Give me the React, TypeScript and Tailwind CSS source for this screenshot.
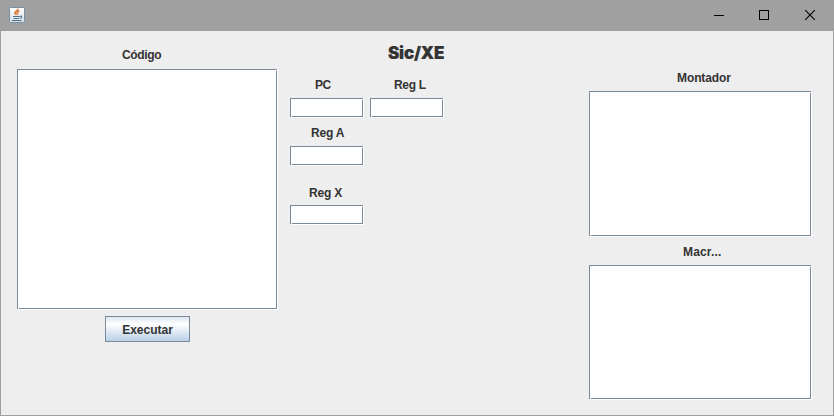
import type { ReactNode } from "react";

function Label({ children, className }: { children: ReactNode; className: string }) {
  return <div className={`h-4 w-fit whitespace-nowrap leading-4 ${className}`}>{children}</div>;
}

/* Metal look-and-feel bevel: slate outline, white drop edge, two notched corners. */
function Bevel({ className }: { className: string }) {
  return (
    <div className={`relative border border-[#7a8a99] bg-white shadow-[1px_1px_0_0_#ffffff] ${className}`}>
      <span className="absolute -right-px top-0 size-px bg-[#eeeeee]" />
      <span className="absolute -bottom-px left-0 size-px bg-[#eeeeee]" />
    </div>
  );
}

function JavaIcon() {
  return (
    <svg width="16" height="16" viewBox="0 0 16 16" fill="none">
      <defs>
        <linearGradient id="tile" x1="0" y1="0" x2="0" y2="1">
          <stop offset="0" stopColor="#ffffff" />
          <stop offset="1" stopColor="#d5dee5" />
        </linearGradient>
      </defs>
      <rect x="0.5" y="0.5" width="15" height="15" rx="1" fill="url(#tile)" stroke="#7890a2" />
      <path d="M9 1.8c.6 1.6-3.5 2.4-3.1 4.2.2.9 1.1 1.3 1.3 1.8M10.4 4C8.3 4.8 7.8 5.6 8.4 6.4c.4.6.2 1-.2 1.4" stroke="#dc7838" strokeWidth="1.6" />
      <path d="M4 9.5h7M4.8 11.5h5.4M3 13.5h9.4M11 9.2c2.3-.5 2.1 1.7.2 2" stroke="#4d738e" strokeWidth="1.1" />
    </svg>
  );
}

export default function App() {
  return (
    <div
      className="flex h-[416px] w-[834px] flex-col overflow-hidden bg-[#eeeeee] text-xs font-bold text-[#333333]"
      style={{ fontFamily: '"Liberation Sans", Arial, sans-serif' }}
    >
      <header className="flex h-[31px] shrink-0 items-start justify-between bg-[#a0a0a0] text-black">
        <div className="pl-[9px] pt-[7px]">
          <JavaIcon />
        </div>
        <svg width="144" height="31" viewBox="0 0 144 31" fill="none" stroke="currentColor">
          <path d="M24 15.5h10" />
          <rect x="69.5" y="10.5" width="9" height="9" />
          <path d="M115.2 10.2l9.6 9.6M124.8 10.2l-9.6 9.6" strokeWidth="1.1" />
        </svg>
      </header>

      <main className="flex flex-1 items-start border-x border-b border-[#a0a0a0]">
        <section className="ml-4 w-[260px] pt-4">
          <Label className="ml-[105px] tracking-[-0.35px]">Código</Label>
          <Bevel className="mt-1.5 h-[240px] w-full" />
          <button className="ml-[88px] mt-[7px] flex h-[26px] w-[85px] items-center justify-center border border-[#7a8a99] bg-linear-to-b from-[#dde8f3] via-white via-30% to-[#b8cfe5] pt-0.5 font-bold">
            Executar
          </button>
        </section>

        <section className="ml-[13px] w-[180px] pt-3">
          <h1 className="ml-[98px] h-5 w-fit whitespace-nowrap text-[17px] font-black leading-5 tracking-[-0.2px] [-webkit-text-stroke:0.2px_#333333] font-[Inter]">
            Sic/XE
          </h1>
          <div className="mt-3.5 flex gap-[7px]">
            <div className="w-[73px]">
              <Label className="ml-[25px] tracking-[-0.4px]">PC</Label>
              <Bevel className="mt-[5px] h-[19px]" />
            </div>
            <div className="w-[73px]">
              <Label className="ml-6 tracking-[-0.3px]">Reg L</Label>
              <Bevel className="mt-[5px] h-[19px]" />
            </div>
          </div>
          <Label className="ml-[21px] mt-2 tracking-[-0.2px]">Reg A</Label>
          <Bevel className="mt-[5px] h-[19px] w-[73px]" />
          <Label className="ml-[19px] mt-5 tracking-[-0.2px]">Reg X</Label>
          <Bevel className="mt-1 h-[19px] w-[73px]" />
        </section>

        <section className="ml-[119px] w-[222px] pt-[39px]">
          <Label className="ml-[88px] tracking-[-0.1px]">Montador</Label>
          <Bevel className="mt-[5px] h-[145px]" />
          <Label className="ml-[94px] mt-2 tracking-[0.15px]">Macr...</Label>
          <Bevel className="mt-[5px] h-[134px]" />
        </section>
      </main>
    </div>
  );
}
